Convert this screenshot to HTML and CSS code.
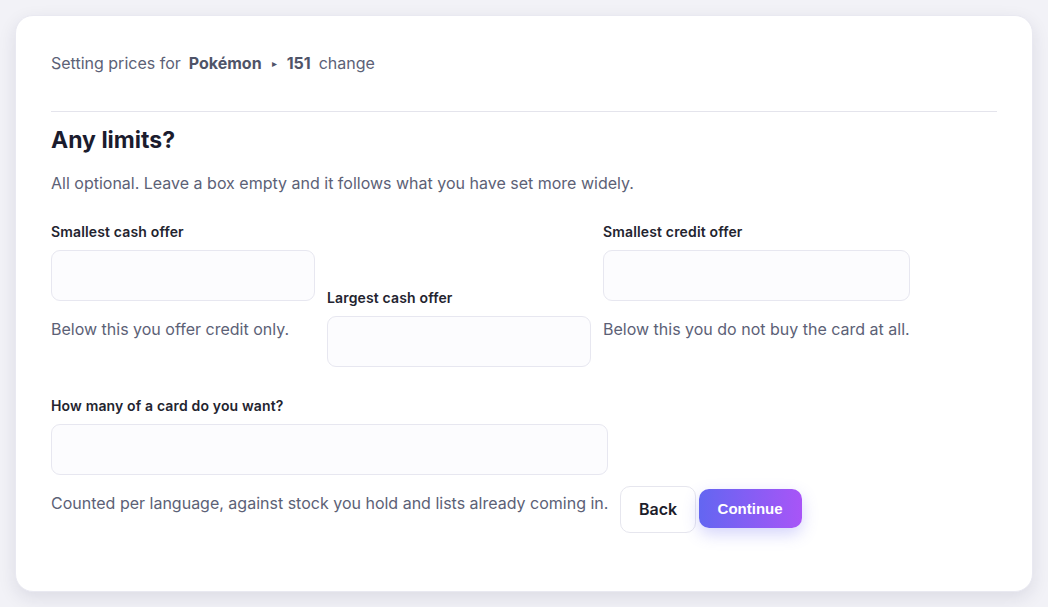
FILE: index.html
```html
<!DOCTYPE html>
<html lang="en">
<head>
<meta charset="utf-8">
<title>Any limits?</title>
<link rel="stylesheet" href="styles.css">
</head>
<body>
<main class="card">
  <div class="crumbs">
    <span>Setting prices for</span>
    <strong>Pokémon</strong>
    <span class="tri">&#9656;</span>
    <strong>151</strong>
    <span>change</span>
  </div>
  <hr class="divider">
  <h1 class="title">Any limits?</h1>
  <p class="lead">All optional. Leave a box empty and it follows what you have set more widely.</p>
  <div class="fields">
    <div class="field">
      <label class="label">Smallest cash offer</label>
      <input class="input" type="text">
      <p class="hint">Below this you offer credit only.</p>
    </div>
    <div class="field field-low">
      <label class="label">Largest cash offer</label>
      <input class="input" type="text">
    </div>
    <div class="field">
      <label class="label">Smallest credit offer</label>
      <input class="input" type="text">
      <p class="hint">Below this you do not buy the card at all.</p>
    </div>
    <div class="field">
      <label class="label">How many of a card do you want?</label>
      <input class="input" type="text">
      <p class="hint">Counted per language, against stock you hold and lists already coming in.</p>
    </div>
    <div class="actions">
      <button class="btn btn-back" type="button">Back</button>
      <button class="btn btn-next" type="button">Continue</button>
    </div>
  </div>
</main>
</body>
</html>
```
FILE: styles.css
```css
* { box-sizing: border-box; }
html, body { height: 100%; }
body {
  margin: 0;
  padding: 15px;
  background: #f2f2f7;
  font-family: "Inter", "Noto Sans", sans-serif;
  color: #1c1d2b;
}
.card {
  min-height: 577px;
  background: #ffffff;
  border: 1px solid #e9e9f1;
  border-radius: 18px;
  box-shadow: 0 6px 18px rgba(30, 30, 70, 0.10);
  padding: 35px 35px;
}
.crumbs {
  display: flex;
  align-items: center;
  gap: 8px;
  font-size: 16px;
  line-height: 24px;
  color: #5c6176;
}
.crumbs strong {
  font-weight: 700;
  color: #4f5468;
}
.crumbs .tri {
  font-size: 10px;
  color: #4f5468;
  margin: 0 2px;
}
.divider {
  border: 0;
  border-top: 1px solid #e4e4ec;
  margin: 36px 0 0;
}
.title {
  margin: 12px 0 0;
  font-size: 23px;
  line-height: 32px;
  font-weight: 700;
  color: #1b1c2e;
  letter-spacing: 0;
}
.lead {
  margin: 15px 0 0;
  font-size: 16px;
  line-height: 24px;
  color: #5c6176;
}
.fields {
  display: flex;
  flex-wrap: wrap;
  align-items: flex-start;
  column-gap: 12px;
  row-gap: 29px;
  margin-top: 27px;
}
.field {
  flex: 0 0 auto;
  min-width: 264px;
  display: flex;
  flex-direction: column;
}
.field-low { margin-top: 66px; }
.label {
  font-size: 14px;
  line-height: 20px;
  font-weight: 600;
  letter-spacing: 0.15px;
  color: #23242f;
}
.input {
  width: 100%;
  min-width: 0;
  height: 51px;
  margin-top: 8px;
  border: 1px solid #e7e7f0;
  border-radius: 9px;
  background: #fcfcfe;
  font: inherit;
}
.hint {
  margin: 16px 0 0;
  font-size: 16px;
  line-height: 24px;
  color: #5c6176;
  white-space: nowrap;
}
.actions {
  display: flex;
  align-items: flex-start;
  gap: 3px;
  margin-top: 90px;
}
.btn {
  cursor: pointer;
  border-radius: 10px;
}
.btn-back {
  padding: 12px 17.5px;
  border: 1px solid #e6e6ee;
  background: #ffffff;
  font-family: "Inter", sans-serif;
  font-weight: 600;
  font-size: 16px;
  line-height: 21px;
  color: #1c1d2b;
}
.btn-next {
  margin-top: 3px;
  padding: 10px 19px;
  border: 0;
  background: linear-gradient(90deg, #6366f1, #a855f7);
  font-family: "Liberation Sans", Arial, sans-serif;
  font-weight: 700;
  font-size: 15px;
  line-height: 19px;
  color: #ffffff;
  box-shadow: 0 6px 16px rgba(99, 102, 241, 0.28);
}
```
